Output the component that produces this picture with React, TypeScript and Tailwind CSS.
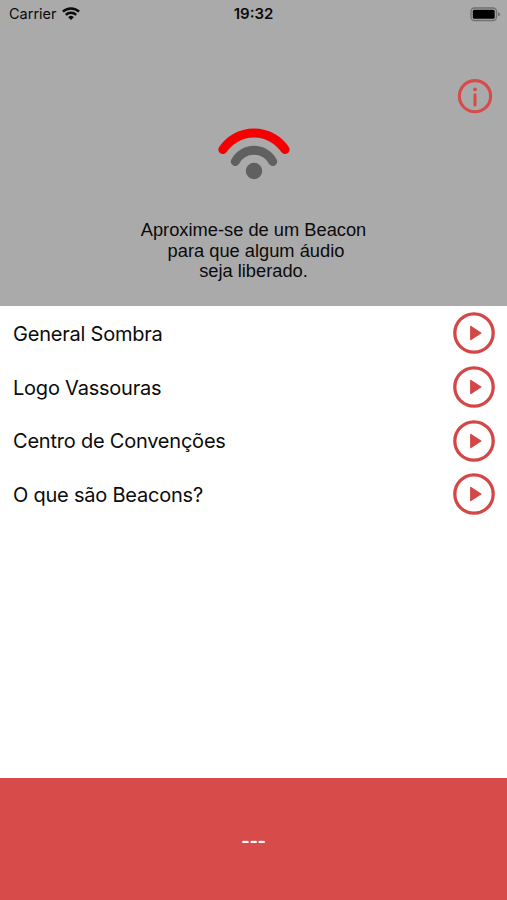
import React from 'react';

const tracks = [
    'General Sombra',
    'Logo Vassouras',
    'Centro de Convenções',
    'O que são Beacons?',
];

const WifiIcon: React.FC = () => (
    <svg width="18" height="14" viewBox="0 0 18 14" fill="none" stroke="#0b0b0b" strokeWidth="2.5">
        <path d="M0.9 4.6A11.8 11.8 0 0 1 17.1 4.6" />
        <path d="M3.8 7.8A7.6 7.6 0 0 1 14.2 7.8" />
        <path d="M9 13L6.2 10.2A4 4 0 0 1 11.8 10.2Z" fill="#0b0b0b" stroke="none" />
    </svg>
);

const BatteryIcon: React.FC = () => (
    <svg width="32" height="15" viewBox="0 0 32 15">
        <rect x="1" y="1" width="25.5" height="12.5" rx="3.5" fill="none" stroke="#707070" strokeWidth="1.3" />
        <rect x="2.8" y="2.8" width="21.9" height="8.9" rx="1.5" fill="#000000" />
        <path d="M28 5.2Q30.2 5.9 30.2 7.2Q30.2 8.6 28 9.3Z" fill="#707070" />
    </svg>
);

const BeaconIcon: React.FC = () => (
    <svg width="80" height="60" viewBox="0 0 80 60" fill="none" strokeWidth="9" strokeLinecap="round">
        <path d="M8.9 25.6A37.5 37.5 0 0 1 71.1 25.6" stroke="#f40000" />
        <path d="M21.3 37.5A21.2 21.2 0 0 1 58.7 37.5" stroke="#606060" />
        <circle cx="40" cy="47" r="8.2" fill="#606060" />
    </svg>
);

const InfoIcon: React.FC = () => (
    <svg width="36" height="36" viewBox="0 0 36 36" fill="none" stroke="#d84b4b">
        <circle cx="18" cy="18.2" r="15.6" strokeWidth="3.1" />
        <circle cx="18" cy="11.3" r="1.9" fill="#d84b4b" stroke="none" />
        <path d="M18 16.8V27" strokeWidth="3" strokeLinecap="round" />
    </svg>
);

const PlayIcon: React.FC = () => (
    <svg width="44" height="44" viewBox="0 0 44 44" fill="none">
        <circle cx="22" cy="22" r="19.2" stroke="#d34747" strokeWidth="3.3" />
        <path d="M18.8 15.5L28.8 22L18.8 28.5Z" fill="#d34747" stroke="#d34747" strokeWidth="1.4" strokeLinejoin="round" />
    </svg>
);

const App: React.FC = () => {
    return (
        <div className="flex h-[900px] w-[507px] flex-col overflow-hidden bg-white font-[Inter,sans-serif] text-[#0b0b0b]">

            {/* Beacon panel */}
            <header className="flex h-[306px] shrink-0 flex-col bg-[#aaaaaa]">
                <div className="grid h-7 grid-cols-3 items-center pr-[5px] pl-[9px]">
                    <div className="flex items-center gap-[6px] text-[14.5px]">
                        <span className="w-[47px] whitespace-nowrap">Carrier</span>
                        <WifiIcon />
                    </div>
                    <span className="pr-1 text-center text-[15px] font-semibold">19:32</span>
                    <div className="flex justify-end">
                        <BatteryIcon />
                    </div>
                </div>

                <div className="mt-[50px] flex justify-end pr-[14px]">
                    <button aria-label="Info">
                        <InfoIcon />
                    </button>
                </div>

                <div className="mt-[10px] flex justify-center">
                    <BeaconIcon />
                </div>

                <p className="mt-9 text-center font-['Liberation_Sans',Arial,sans-serif] text-[18.3px] leading-[20.5px]">
                    Aproxime-se de um Beacon
                    <br />
                    <span className="pl-[5px]">para que algum áudio</span>
                    <br />
                    seja liberado.
                </p>
            </header>

            {/* Audio list */}
            <ul className="flex-1">
                {tracks.map((title) => (
                    <li key={title} className="flex h-[53.75px] items-center justify-between pt-[0.4px] pr-[11px] pl-[13px]">
                        <span className="pt-[1.6px] text-[20px] tracking-[-0.22px]">{title}</span>
                        <button aria-label={`Play ${title}`}>
                            <PlayIcon />
                        </button>
                    </li>
                ))}
            </ul>

            {/* Player */}
            <footer className="flex h-[122px] shrink-0 items-center justify-center bg-[#d84b4b] text-white">
                <span className="pt-[3px] text-[18px] font-bold tracking-[-0.3px]">---</span>
            </footer>
        </div>
    );
};

export default App;
